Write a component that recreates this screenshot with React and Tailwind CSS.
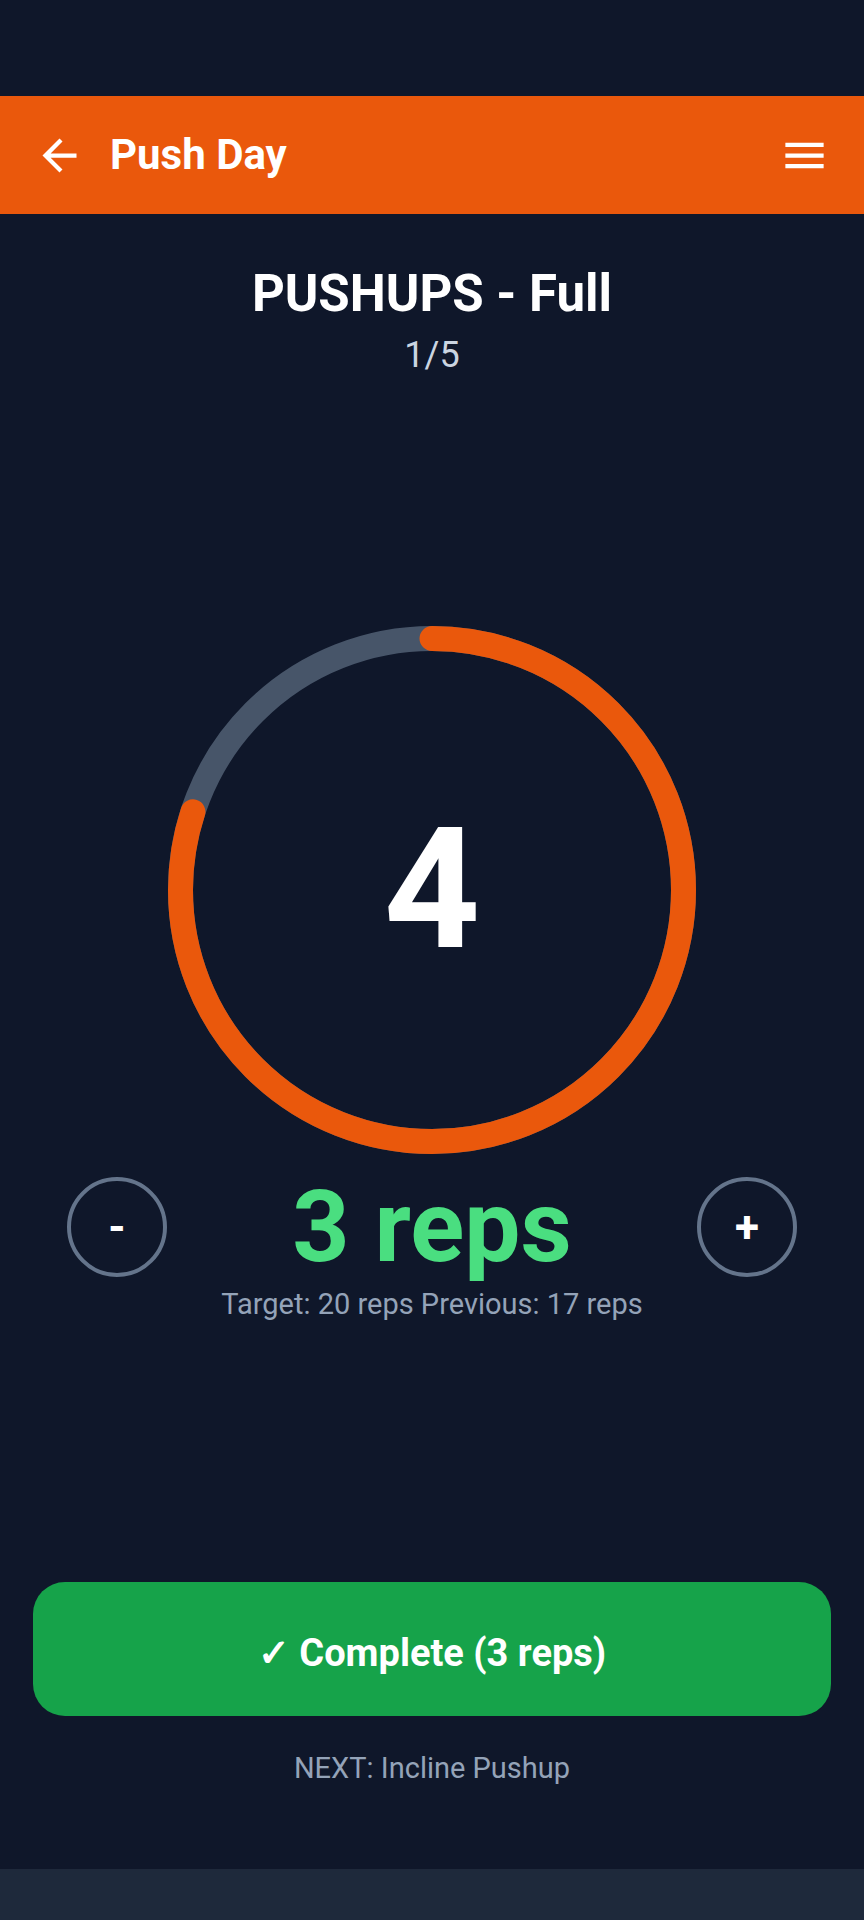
import React, { useState } from 'react';

const RING_SIZE = 528;
const STROKE = 25;
const RADIUS = (RING_SIZE - STROKE) / 2;
const CIRC = 2 * Math.PI * RADIUS;

const BackIcon = () => (
    <svg width="51" height="51" viewBox="0 0 24 24" fill="#ffffff">
        <path d="M20 11H7.83l5.59-5.59L12 4l-8 8 8 8 1.41-1.41L7.83 13H20v-2z" />
    </svg>
);

const MenuIcon = () => (
    <svg width="51" height="51" viewBox="0 0 24 24" fill="#ffffff">
        <path d="M3 18h18v-2H3v2zm0-5h18v-2H3v2zm0-7v2h18V6H3z" />
    </svg>
);

const App = () => {
    const [reps, setReps] = useState(3);
    const currentSet = 4;
    const progress = 0.8;

    return (
        <div className="w-full h-[1920px] bg-[#0f172a] flex flex-col font-['Roboto',sans-serif] text-white">
            <div className="h-[96px]" />
            <header className="h-[118px] bg-[#ea580c] flex items-center justify-between px-[34px]">
                <div className="flex items-center">
                    <BackIcon />
                    <h1 className="ml-[25px] text-[42px] leading-[50px] font-bold">Push Day</h1>
                </div>
                <MenuIcon />
            </header>

            <main className="flex flex-col items-center">
                <h2 className="mt-[50px] text-[51px] leading-[60px] font-bold">PUSHUPS - Full</h2>
                <div className="mt-[9px] text-[36px] leading-[44px] text-[#cbd5e1]">1/5</div>

                <div className="relative mt-[249px] w-[528px] h-[528px]">
                    <svg width={RING_SIZE} height={RING_SIZE} className="-rotate-90">
                        <circle
                            cx={RING_SIZE / 2}
                            cy={RING_SIZE / 2}
                            r={RADIUS}
                            fill="none"
                            stroke="#475569"
                            strokeWidth={STROKE}
                        />
                        <circle
                            cx={RING_SIZE / 2}
                            cy={RING_SIZE / 2}
                            r={RADIUS}
                            fill="none"
                            stroke="#ea580c"
                            strokeWidth={STROKE}
                            strokeLinecap="round"
                            strokeDasharray={`${CIRC * progress} ${CIRC}`}
                        />
                    </svg>
                    <div className="absolute inset-0 flex items-center justify-center">
                        <span className="text-[168px] leading-[168px] font-bold">{currentSet}</span>
                    </div>
                </div>

                <div className="mt-[23px] w-full px-[67px] flex items-center justify-between">
                    <button
                        onClick={() => setReps(Math.max(0, reps - 1))}
                        className="w-[100px] h-[100px] rounded-full border-4 border-[#64748b] flex items-center justify-center text-[44px] font-bold"
                    >
                        -
                    </button>
                    <div className="text-[100px] leading-[100px] font-bold text-[#4ade80]">{reps} reps</div>
                    <button
                        onClick={() => setReps(reps + 1)}
                        className="w-[100px] h-[100px] rounded-full border-4 border-[#64748b] flex items-center justify-center text-[44px] font-bold"
                    >
                        +
                    </button>
                </div>
                <div className="mt-[9px] text-[29px] leading-[36px] text-[#94a3b8]">
                    Target: 20 reps Previous: 17 reps
                </div>

                <button className="mt-[260px] w-[798px] h-[134px] pt-[8px] rounded-[32px] bg-[#16a34a] text-[38px] leading-[44px] font-bold">
                    ✓ Complete ({reps} reps)
                </button>
                <div className="mt-[34px] text-[29px] leading-[36px] text-[#94a3b8]">NEXT: Incline Pushup</div>
            </main>

            <div className="mt-auto h-[51px] bg-[#1e293b]" />
        </div>
    );
};

export default App;
